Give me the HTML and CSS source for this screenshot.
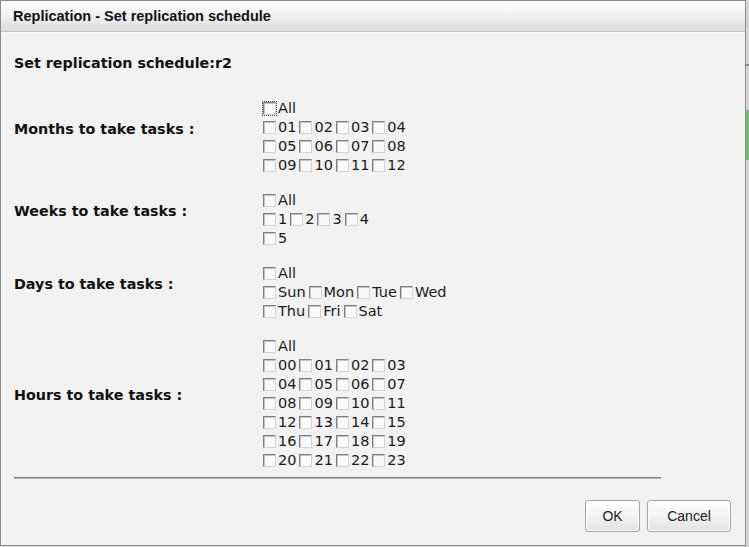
FILE: index.html
```html
<!DOCTYPE html>
<html>
<head>
<meta charset="utf-8">
<link rel="stylesheet" href="styles.css">
</head>
<body>
<div class="win">
  <div class="titlebar">Replication - Set replication schedule</div>
  <div class="content">
    <div class="heading">Set replication schedule:r2</div>
    <div class="form">
      <div class="section">
        <div class="label">Months to take tasks :</div>
        <div class="opts">
          <div class="line"><label class="opt"><input type="checkbox" class="cb focus">All</label></div>
          <div class="line"><label class="opt"><input type="checkbox" class="cb">01</label><label class="opt"><input type="checkbox" class="cb">02</label><label class="opt"><input type="checkbox" class="cb">03</label><label class="opt"><input type="checkbox" class="cb">04</label></div>
          <div class="line"><label class="opt"><input type="checkbox" class="cb">05</label><label class="opt"><input type="checkbox" class="cb">06</label><label class="opt"><input type="checkbox" class="cb">07</label><label class="opt"><input type="checkbox" class="cb">08</label></div>
          <div class="line"><label class="opt"><input type="checkbox" class="cb">09</label><label class="opt"><input type="checkbox" class="cb">10</label><label class="opt"><input type="checkbox" class="cb">11</label><label class="opt"><input type="checkbox" class="cb">12</label></div>
        </div>
      </div>
      <div class="section">
        <div class="label">Weeks to take tasks :</div>
        <div class="opts">
          <div class="line"><label class="opt"><input type="checkbox" class="cb">All</label></div>
          <div class="line"><label class="opt"><input type="checkbox" class="cb">1</label><label class="opt"><input type="checkbox" class="cb">2</label><label class="opt"><input type="checkbox" class="cb">3</label><label class="opt"><input type="checkbox" class="cb">4</label></div>
          <div class="line"><label class="opt"><input type="checkbox" class="cb">5</label></div>
        </div>
      </div>
      <div class="section">
        <div class="label">Days to take tasks :</div>
        <div class="opts">
          <div class="line"><label class="opt"><input type="checkbox" class="cb">All</label></div>
          <div class="line"><label class="opt"><input type="checkbox" class="cb">Sun</label><label class="opt"><input type="checkbox" class="cb">Mon</label><label class="opt"><input type="checkbox" class="cb">Tue</label><label class="opt"><input type="checkbox" class="cb">Wed</label></div>
          <div class="line"><label class="opt"><input type="checkbox" class="cb">Thu</label><label class="opt"><input type="checkbox" class="cb">Fri</label><label class="opt"><input type="checkbox" class="cb">Sat</label></div>
        </div>
      </div>
      <div class="section">
        <div class="label">Hours to take tasks :</div>
        <div class="opts">
          <div class="line"><label class="opt"><input type="checkbox" class="cb">All</label></div>
          <div class="line"><label class="opt"><input type="checkbox" class="cb">00</label><label class="opt"><input type="checkbox" class="cb">01</label><label class="opt"><input type="checkbox" class="cb">02</label><label class="opt"><input type="checkbox" class="cb">03</label></div>
          <div class="line"><label class="opt"><input type="checkbox" class="cb">04</label><label class="opt"><input type="checkbox" class="cb">05</label><label class="opt"><input type="checkbox" class="cb">06</label><label class="opt"><input type="checkbox" class="cb">07</label></div>
          <div class="line"><label class="opt"><input type="checkbox" class="cb">08</label><label class="opt"><input type="checkbox" class="cb">09</label><label class="opt"><input type="checkbox" class="cb">10</label><label class="opt"><input type="checkbox" class="cb">11</label></div>
          <div class="line"><label class="opt"><input type="checkbox" class="cb">12</label><label class="opt"><input type="checkbox" class="cb">13</label><label class="opt"><input type="checkbox" class="cb">14</label><label class="opt"><input type="checkbox" class="cb">15</label></div>
          <div class="line"><label class="opt"><input type="checkbox" class="cb">16</label><label class="opt"><input type="checkbox" class="cb">17</label><label class="opt"><input type="checkbox" class="cb">18</label><label class="opt"><input type="checkbox" class="cb">19</label></div>
          <div class="line"><label class="opt"><input type="checkbox" class="cb">20</label><label class="opt"><input type="checkbox" class="cb">21</label><label class="opt"><input type="checkbox" class="cb">22</label><label class="opt"><input type="checkbox" class="cb">23</label></div>
        </div>
      </div>
    </div>
    <div class="sep"></div>
    <div class="actions">
      <button class="btn btn-ok">OK</button>
      <button class="btn btn-cancel">Cancel</button>
    </div>
  </div>
</div>
</body>
</html>
```

FILE: styles.css
```css
html, body {
  margin: 0;
  padding: 0;
}
body {
  width: 749px;
  height: 547px;
  overflow: hidden;
  background: linear-gradient(to bottom, #d6d6d6 0, #d6d6d6 64px, #8a8a8a 64px, #8a8a8a 66px, #d6d6d6 66px, #d6d6d6 110px, #6cbf6c 110px, #6cbf6c 160px, #d6d6d6 160px);
  font-family: "DejaVu Sans", Verdana, sans-serif;
  color: #111;
}
.win {
  width: 744px;
  height: 544px;
  border: 1px solid #8c8c8c;
  background: #f2f2f2;
  display: flex;
  flex-direction: column;
}
.titlebar {
  height: 30px;
  line-height: 30px;
  padding-left: 12px;
  border-bottom: 1px solid #c4c4c4;
  box-shadow: 0 1px 0 #fafafa;
  background: linear-gradient(to bottom, #fdfdfd, #f0f0f0 50%, #dcdcdc);
  font-family: "Liberation Sans", Arial, sans-serif;
  font-weight: bold;
  font-size: 14.5px;
  color: #111;
}
.content {
  flex: 1;
  display: flex;
  flex-direction: column;
  padding: 23px 13px 13px 13px;
}
.heading {
  font-weight: bold;
  font-size: 14.3px;
  line-height: 17px;
}
.form {
  margin-top: 27px;
  display: flex;
  flex-direction: column;
}
.section {
  display: grid;
  grid-template-columns: 246px auto;
  margin-bottom: 16px;
}
.label {
  align-self: center;
  padding-bottom: 16px;
  font-weight: bold;
  font-size: 14.3px;
  line-height: 17px;
}
.opts {
  display: flex;
  flex-direction: column;
}
.line {
  height: 19px;
  display: flex;
  align-items: center;
}
.opt {
  display: inline-flex;
  align-items: center;
  font-size: 14.5px;
  line-height: 19px;
  color: #1a1a1a;
}
.cb {
  appearance: none;
  -webkit-appearance: none;
  width: 13px;
  height: 13px;
  margin: 0 2px 0 3px;
  box-sizing: border-box;
  border: 1px solid;
  border-color: #808080 #d4d4d4 #d4d4d4 #808080;
  box-shadow: inset 1px 1px 0 #c4c4c4;
  background: #fafafa;
}
.focus {
  outline: 1px dotted #444;
  outline-offset: 0;
}
.sep {
  margin-top: -9px;
  width: 647px;
  border-top: 1px solid #7c7c7c;
  border-bottom: 1px solid #b4b4b4;
}
.actions {
  margin-top: auto;
  margin-right: 1px;
  display: flex;
  justify-content: flex-end;
  gap: 7px;
}
.btn {
  height: 32px;
  border: 1px solid #a6a6a6;
  border-radius: 3px;
  background: linear-gradient(to bottom, #ffffff, #f3f3f3 50%, #e2e2e2);
  font-family: "Liberation Sans", Arial, sans-serif;
  font-size: 14px;
  color: #222;
  padding: 0;
  box-shadow: inset 0 0 0 1px #fbfbfb;
}
.btn-ok {
  width: 55px;
}
.btn-cancel {
  width: 84px;
}
```
